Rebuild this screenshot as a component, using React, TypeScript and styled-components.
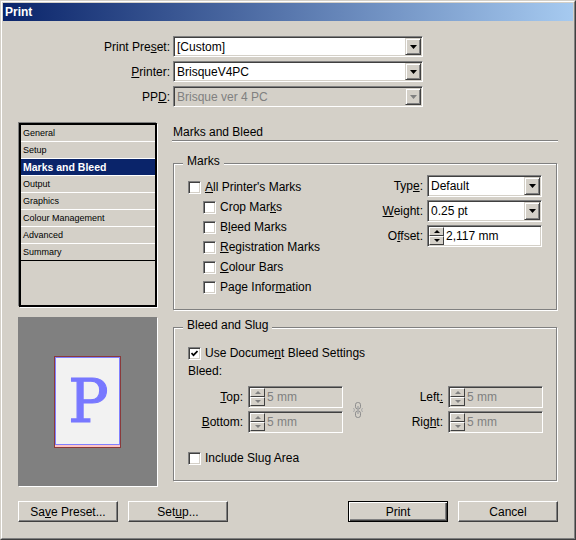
import React from "react";
import styled, { createGlobalStyle } from "styled-components";

const GlobalStyle = createGlobalStyle`
  html, body { margin: 0; padding: 0; background: #d4d0c8; }
  body { font-family: "Liberation Sans", Arial, sans-serif; font-size: 12px; color: #000; }
  * { box-sizing: border-box; }
`;

const Window = styled.div`
  width: 576px;
  height: 540px;
  background: #d4d0c8;
  border: 1px solid;
  border-color: #d4d0c8 #404040 #404040 #d4d0c8;
  display: flex;
  flex-direction: column;
`;

const WindowInner = styled.div`
  flex: 1;
  border: 1px solid;
  border-color: #fff #808080 #808080 #fff;
  padding: 1px;
  display: flex;
  flex-direction: column;
`;

const TitleBar = styled.div`
  height: 18px;
  flex: none;
  background: linear-gradient(to right, #0a246a, #a6caf0);
  color: #fff;
  font-weight: bold;
  font-size: 12px;
  line-height: 18px;
  padding-left: 2px;
`;

const Body = styled.div`
  flex: 1;
  display: flex;
  flex-direction: column;
  padding: 15px 15px 0 15px;
`;

const PresetGrid = styled.div`
  display: grid;
  grid-template-columns: 152px 250px;
  column-gap: 3px;
  row-gap: 4px;
  align-items: center;
`;

const FieldLabel = styled.span`
  text-align: right;
  white-space: nowrap;
  line-height: 14px;
`;

const Combo = styled.div<{ $disabled?: boolean; $h?: number }>`
  display: flex;
  height: ${(p) => (p.$h ? p.$h : 21)}px;
  background: ${(p) => (p.$disabled ? "#d4d0c8" : "#fff")};
  border: 1px solid;
  border-color: #808080 #fff #fff #808080;
  box-shadow: inset 1px 1px #404040, inset -1px -1px #d4d0c8;
  padding: 1px;
`;

const ComboText = styled.span<{ $disabled?: boolean }>`
  flex: 1;
  padding-left: 2px;
  display: flex;
  align-items: center;
  color: ${(p) => (p.$disabled ? "#808080" : "#000")};
  white-space: nowrap;
  overflow: hidden;
`;

const ComboButton = styled.span`
  width: 16px;
  flex: none;
  background: #d4d0c8;
  border: 1px solid;
  border-color: #d4d0c8 #404040 #404040 #d4d0c8;
  box-shadow: inset 1px 1px #fff, inset -1px -1px #808080;
  display: flex;
  align-items: center;
  justify-content: center;
`;

const Middle = styled.div`
  display: flex;
  gap: 14px;
  margin-top: 15px;
`;

const LeftColumn = styled.div`
  width: 140px;
  flex: none;
  display: flex;
  flex-direction: column;
`;

const ListBox = styled.div`
  margin: 1px 0 0 1px;
  width: 138px;
  height: 184px;
  border: 2px solid #000;
  box-shadow: -1px -1px 0 #808080, 1px 1px 0 #fff;
  background: #d4d0c8;
  display: flex;
  flex-direction: column;
`;

const ListItem = styled.div<{ $selected?: boolean; $last?: boolean }>`
  height: 17px;
  flex: none;
  border-bottom: 1px solid ${(p) => (p.$last ? "#000" : "#fff")};
  background: ${(p) => (p.$selected ? "#0a246a" : "transparent")};
  color: ${(p) => (p.$selected ? "#fff" : "#000")};
  font-weight: ${(p) => (p.$selected ? "bold" : "normal")};
  font-size: ${(p) => (p.$selected ? "10.5px" : "9px")};
  line-height: 16px;
  padding-left: 2px;
  white-space: nowrap;
`;

const Preview = styled.div`
  margin-top: 10px;
  width: 139px;
  height: 169px;
  background: #808080;
  box-shadow: 1px 1px 0 #fff;
  display: flex;
  align-items: center;
  justify-content: center;
`;

const Page = styled.div`
  width: 67px;
  height: 92px;
  border: 1px solid #8a3a3a;
  background: #ffc4c4;
  display: flex;
  flex-direction: column;
`;

const Trim = styled.div`
  flex: 1;
  margin-bottom: 2px;
  border: 1px solid #8080ff;
  background: #f2f2f2;
  display: flex;
  align-items: center;
  justify-content: center;
`;

const BigP = styled.span`
  font-family: "DejaVu Serif", "Liberation Serif", serif;
  font-size: 60px;
  line-height: 1;
  color: #7878ff;
  -webkit-text-stroke: 1.2px #7878ff;
  margin-left: 2px;
`;

const RightColumn = styled.div`
  flex: 1;
  display: flex;
  flex-direction: column;
`;

const SectionHeader = styled.div`
  height: 19px;
  padding: 3px 0 0 1px;
  line-height: 14px;
  border-bottom: 1px solid #808080;
  box-shadow: 0 1px 0 #fff;
`;

const Group = styled.div<{ $h: number; $top: number }>`
  position: relative;
  height: ${(p) => p.$h}px;
  margin: ${(p) => p.$top}px 1px 0 1px;
  border: 1px solid #808080;
  box-shadow: inset 1px 1px #fff, 1px 1px #fff;
`;

const Legend = styled.span`
  position: absolute;
  top: -10px;
  left: 9px;
  padding: 0 4px;
  background: #d4d0c8;
  line-height: 14px;
`;

const MarksContent = styled.div`
  display: flex;
  justify-content: space-between;
  align-items: flex-start;
  padding: 11px 14px 0 14px;
`;

const CheckList = styled.div`
  display: flex;
  flex-direction: column;
  padding-top: 2px;
`;

const CheckRow = styled.label<{ $indent?: boolean; $gap?: number }>`
  display: flex;
  align-items: center;
  gap: 4px;
  height: 20px;
  padding-left: ${(p) => (p.$indent ? 15 : 0)}px;
  margin-top: ${(p) => p.$gap ?? 0}px;
  white-space: nowrap;
`;

const Box = styled.span`
  width: 13px;
  height: 13px;
  flex: none;
  background: #fff;
  border: 1px solid;
  border-color: #808080 #fff #fff #808080;
  box-shadow: inset 1px 1px #404040, inset -1px -1px #d4d0c8;
  display: flex;
  align-items: center;
  justify-content: center;
`;

const FormGrid = styled.div`
  display: grid;
  grid-template-columns: auto 115px;
  column-gap: 4px;
  row-gap: 3px;
  align-items: center;
`;

const SpinField = styled.div<{ $disabled?: boolean }>`
  display: flex;
  height: 22px;
  background: ${(p) => (p.$disabled ? "#d4d0c8" : "#fff")};
  border: 1px solid;
  border-color: #808080 #fff #fff #808080;
  box-shadow: inset 1px 1px #404040, inset -1px -1px #d4d0c8;
  padding: 1px;
`;

const SpinButtons = styled.span`
  width: 15px;
  flex: none;
  display: flex;
  flex-direction: column;
`;

const SpinHalf = styled.span`
  flex: 1;
  background: #d4d0c8;
  border: 1px solid;
  border-color: #fff #404040 #404040 #fff;
  display: flex;
  align-items: center;
  justify-content: center;
`;

const Arrow = styled.span<{ $down?: boolean; $disabled?: boolean }>`
  width: 0;
  height: 0;
  border-left: 3px solid transparent;
  border-right: 3px solid transparent;
  ${(p) => (p.$down ? "border-top" : "border-bottom")}: 3px solid ${(p) => (p.$disabled ? "#808080" : "#000")};
`;

const SpinValue = styled.span<{ $disabled?: boolean }>`
  flex: 1;
  padding-left: 2px;
  display: flex;
  align-items: center;
  color: ${(p) => (p.$disabled ? "#808080" : "#000")};
`;

const BleedContent = styled.div`
  display: flex;
  flex-direction: column;
  padding: 15px 13px 0 14px;
`;

const BleedText = styled.div`
  height: 17px;
  line-height: 16px;
`;

const BleedGrid = styled.div`
  display: grid;
  grid-template-columns: 55px 95px 20px 1fr 95px;
  grid-template-rows: 22px 22px;
  column-gap: 5px;
  row-gap: 3px;
  align-items: center;
  margin-top: 6px;
`;

const LinkCell = styled.span`
  grid-column: 3;
  grid-row: 1 / 3;
  display: flex;
  align-items: center;
  justify-content: center;
`;

const Footer = styled.div`
  display: flex;
  justify-content: space-between;
  margin-top: 15px;
`;

const ButtonGroup = styled.div`
  display: flex;
  gap: 10px;
`;

const Button = styled.button<{ $default?: boolean }>`
  width: 100px;
  height: 21px;
  padding: 0;
  font-family: inherit;
  font-size: 12px;
  color: #000;
  background: #d4d0c8;
  border: 1px solid;
  border-color: ${(p) => (p.$default ? "#000" : "#fff #404040 #404040 #fff")};
  box-shadow: ${(p) =>
    p.$default
      ? "inset 1px 1px #fff, inset -1px -1px #404040, inset -2px -2px #808080"
      : "inset -1px -1px #808080"};
`;

const DropArrow = ({ disabled }: { disabled?: boolean }) => (
  <svg width="7" height="4" viewBox="0 0 7 4">
    <polygon points="0,0 7,0 3.5,4" fill={disabled ? "#808080" : "#000"} />
  </svg>
);

const CheckMark = () => (
  <svg width="7" height="7" viewBox="0 0 7 7">
    <polyline points="0.5,3 2.5,5.2 6.5,1" fill="none" stroke="#000" strokeWidth="1.7" />
  </svg>
);

const Check = ({
  checked,
  indent,
  gap,
  children,
}: {
  checked?: boolean;
  indent?: boolean;
  gap?: number;
  children: React.ReactNode;
}) => (
  <CheckRow $indent={indent} $gap={gap}>
    <Box>{checked && <CheckMark />}</Box>
    <span>{children}</span>
  </CheckRow>
);

const ComboBox = ({ value, disabled, h }: { value: string; disabled?: boolean; h?: number }) => (
  <Combo $disabled={disabled} $h={h}>
    <ComboText $disabled={disabled}>{value}</ComboText>
    <ComboButton>
      <DropArrow disabled={disabled} />
    </ComboButton>
  </Combo>
);

const Spinner = ({ value, disabled }: { value: string; disabled?: boolean }) => (
  <SpinField $disabled={disabled}>
    <SpinButtons>
      <SpinHalf>
        <Arrow $disabled={disabled} />
      </SpinHalf>
      <SpinHalf>
        <Arrow $down $disabled={disabled} />
      </SpinHalf>
    </SpinButtons>
    <SpinValue $disabled={disabled}>{value}</SpinValue>
  </SpinField>
);

const LinkIcon = () => (
  <svg width="12" height="16" viewBox="0 0 12 16">
    <rect x="3.5" y="0.5" width="5" height="6.5" rx="2.2" fill="none" stroke="#8c8c8c" />
    <rect x="3.5" y="9" width="5" height="6.5" rx="2.2" fill="none" stroke="#8c8c8c" />
    <line x1="6" y1="4" x2="6" y2="12" stroke="#a8a8a8" strokeWidth="1.5" />
    <line x1="1" y1="6.5" x2="3" y2="7.5" stroke="#a8a8a8" />
    <line x1="9" y1="7.5" x2="11" y2="6.5" stroke="#a8a8a8" />
    <line x1="1" y1="9.5" x2="3" y2="8.5" stroke="#a8a8a8" />
    <line x1="9" y1="8.5" x2="11" y2="9.5" stroke="#a8a8a8" />
  </svg>
);

const listItems = [
  "General",
  "Setup",
  "Marks and Bleed",
  "Output",
  "Graphics",
  "Colour Management",
  "Advanced",
  "Summary",
];

export default function App() {
  return (
    <>
      <GlobalStyle />
      <Window>
        <WindowInner>
          <TitleBar>Print</TitleBar>
          <Body>
            <PresetGrid>
              <FieldLabel>
                Print Pre<u>s</u>et:
              </FieldLabel>
              <ComboBox value="[Custom]" />
              <FieldLabel>
                <u>P</u>rinter:
              </FieldLabel>
              <ComboBox value="BrisqueV4PC" />
              <FieldLabel>
                PP<u>D</u>:
              </FieldLabel>
              <ComboBox value="Brisque ver 4 PC" disabled />
            </PresetGrid>

            <Middle>
              <LeftColumn>
                <ListBox>
                  {listItems.map((item, i) => (
                    <ListItem key={item} $selected={i === 2} $last={i === listItems.length - 1}>
                      {item}
                    </ListItem>
                  ))}
                </ListBox>
                <Preview>
                  <Page>
                    <Trim>
                      <BigP>P</BigP>
                    </Trim>
                  </Page>
                </Preview>
              </LeftColumn>

              <RightColumn>
                <SectionHeader>Marks and Bleed</SectionHeader>

                <Group $h={147} $top={22}>
                  <Legend>Marks</Legend>
                  <MarksContent>
                    <CheckList>
                      <Check>
                        <u>A</u>ll Printer's Marks
                      </Check>
                      <Check indent>
                        Crop Mar<u>k</u>s
                      </Check>
                      <Check indent>
                        B<u>l</u>eed Marks
                      </Check>
                      <Check indent>
                        <u>R</u>egistration Marks
                      </Check>
                      <Check indent>
                        <u>C</u>olour Bars
                      </Check>
                      <Check indent>
                        Page Infor<u>m</u>ation
                      </Check>
                    </CheckList>
                    <FormGrid>
                      <FieldLabel>
                        Typ<u>e</u>:
                      </FieldLabel>
                      <ComboBox value="Default" h={22} />
                      <FieldLabel>
                        <u>W</u>eight:
                      </FieldLabel>
                      <ComboBox value="0.25 pt" h={22} />
                      <FieldLabel>
                        O<u>f</u>fset:
                      </FieldLabel>
                      <Spinner value="2,117 mm" />
                    </FormGrid>
                  </MarksContent>
                </Group>

                <Group $h={154} $top={17}>
                  <Legend>Bleed and Slug</Legend>
                  <BleedContent>
                    <Check checked>
                      Use Docume<u>n</u>t Bleed Settings
                    </Check>
                    <BleedText>Bleed:</BleedText>
                    <BleedGrid>
                      <FieldLabel>
                        <u>T</u>op:
                      </FieldLabel>
                      <Spinner value="5 mm" disabled />
                      <LinkCell>
                        <LinkIcon />
                      </LinkCell>
                      <FieldLabel>
                        Left<u>:</u>
                      </FieldLabel>
                      <Spinner value="5 mm" disabled />
                      <FieldLabel>
                        <u>B</u>ottom:
                      </FieldLabel>
                      <Spinner value="5 mm" disabled />
                      <FieldLabel>
                        Rig<u>h</u>t:
                      </FieldLabel>
                      <Spinner value="5 mm" disabled />
                    </BleedGrid>
                    <Check gap={15}>
                      Include Slu<u>g</u> Area
                    </Check>
                  </BleedContent>
                </Group>
              </RightColumn>
            </Middle>

            <Footer>
              <ButtonGroup>
                <Button>
                  Sa<u>v</u>e Preset...
                </Button>
                <Button>
                  Set<u>u</u>p...
                </Button>
              </ButtonGroup>
              <ButtonGroup>
                <Button $default>Print</Button>
                <Button>Cancel</Button>
              </ButtonGroup>
            </Footer>
          </Body>
        </WindowInner>
      </Window>
    </>
  );
}
